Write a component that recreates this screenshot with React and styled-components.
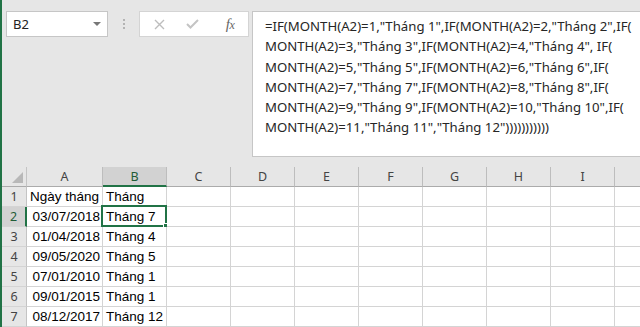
import React from "react";
import styled, { createGlobalStyle } from "styled-components";

const GlobalStyle = createGlobalStyle`
  html, body {
    margin: 0;
    padding: 0;
    background: #e6e6e6;
    overflow: hidden;
  }
`;

const Window = styled.div`
  width: 640px;
  height: 327px;
  box-sizing: border-box;
  border-left: 2px solid #217346;
  background: #e6e6e6;
  display: flex;
  flex-direction: column;
  overflow: hidden;
`;

const TopBar = styled.div`
  display: flex;
  align-items: flex-start;
  padding: 11px 0 0 4px;
`;

const NameBox = styled.div`
  width: 102px;
  height: 26px;
  box-sizing: border-box;
  border: 1px solid #c6c6c6;
  background: #fff;
  display: flex;
  align-items: center;
  justify-content: space-between;
  padding: 0 6px;
  font-family: "Noto Sans", sans-serif;
  font-size: 13px;
  color: #222;
`;

const Arrow = styled.span`
  width: 0;
  height: 0;
  border-left: 4px solid transparent;
  border-right: 4px solid transparent;
  border-top: 4px solid #777;
`;

const Grip = styled.div`
  display: flex;
  flex-direction: column;
  gap: 2px;
  margin: 8px 14px 0 15px;
`;

const Dot = styled.span`
  width: 2px;
  height: 2px;
  background: #b3b3b3;
`;

const FxBox = styled.div`
  width: 110px;
  height: 26px;
  box-sizing: border-box;
  border: 1px solid #d4d4d4;
  background: #fff;
  display: grid;
  grid-template-columns: 38px 28px 42px;
  align-items: center;
`;

const IconSlot = styled.div`
  display: flex;
  justify-content: center;
  align-items: center;
  padding-left: ${(p) => p.$shift || 0}px;
`;

const FxText = styled.span`
  font-family: "Liberation Serif", serif;
  font-style: italic;
  font-size: 15px;
  color: #666;
  letter-spacing: -0.5px;
  small {
    font-size: 12px;
  }
`;

const FormulaBar = styled.div`
  flex: 1;
  height: 146px;
  box-sizing: border-box;
  margin-left: 3px;
  border: 1px solid #c6c6c6;
  border-right: none;
  background: #fff;
  padding: 4px 0 0 12px;
  font-family: "Noto Sans", sans-serif;
  font-size: 13.2px;
  line-height: 20.3px;
  color: #262626;
`;

const FormulaLine = styled.div`
  white-space: pre;
`;

const Sheet = styled.div`
  margin-top: 10px;
  display: grid;
  grid-template-columns: 25px 76px repeat(9, 64px);
  grid-auto-rows: 20px;
`;

const Corner = styled.div`
  box-sizing: border-box;
  border-right: 1px solid #c4c4c4;
  border-bottom: 1px solid #ababab;
  display: flex;
  align-items: flex-end;
  justify-content: flex-end;
  padding: 0 3px 3px 0;
`;

const ColHead = styled.div`
  box-sizing: border-box;
  background: ${(p) => (p.$selected ? "#d2d2d2" : "#e6e6e6")};
  border-right: 1px solid #bdbdbd;
  border-bottom: ${(p) => (p.$selected ? "2px solid #217346" : "1px solid #ababab")};
  display: flex;
  align-items: center;
  justify-content: center;
  font-family: "Noto Sans", sans-serif;
  font-size: 12.5px;
  color: ${(p) => (p.$selected ? "#1f5c37" : "#444")};
  padding-top: ${(p) => (p.$selected ? 1 : 0)}px;
`;

const RowHead = styled.div`
  box-sizing: border-box;
  background: ${(p) => (p.$selected ? "#d2d2d2" : "#e6e6e6")};
  border-right: ${(p) => (p.$selected ? "2px solid #217346" : "1px solid #c4c4c4")};
  border-bottom: 1px solid #d4d4d4;
  display: flex;
  align-items: center;
  justify-content: center;
  font-family: "Noto Sans", sans-serif;
  font-size: 12.5px;
  color: ${(p) => (p.$selected ? "#1f5c37" : "#444")};
`;

const Cell = styled.div`
  position: relative;
  box-sizing: border-box;
  background: #fff;
  border-right: 1px solid #d4d4d4;
  border-bottom: 1px solid #d4d4d4;
  padding: 0 2px 0 3px;
  font-family: "Liberation Sans", Arial, sans-serif;
  font-size: 13.5px;
  line-height: 20px;
  color: #000;
  white-space: nowrap;
  text-align: ${(p) => p.$align || "left"};
`;

const Selection = styled.div`
  position: absolute;
  top: -2px;
  left: -2px;
  right: -1px;
  bottom: -1px;
  border: 2px solid #217346;
  pointer-events: none;
`;

const FillHandle = styled.div`
  position: absolute;
  right: -5px;
  bottom: -5px;
  width: 5px;
  height: 5px;
  background: #217346;
  border: 1px solid #fff;
`;

const formula = [
  '=IF(MONTH(A2)=1,"Tháng 1",IF(MONTH(A2)=2,"Tháng 2",IF(',
  'MONTH(A2)=3,"Tháng 3",IF(MONTH(A2)=4,"Tháng 4", IF(',
  'MONTH(A2)=5,"Tháng 5",IF(MONTH(A2)=6,"Tháng 6",IF(',
  'MONTH(A2)=7,"Tháng 7",IF(MONTH(A2)=8,"Tháng 8",IF(',
  'MONTH(A2)=9,"Tháng 9",IF(MONTH(A2)=10,"Tháng 10",IF(',
  'MONTH(A2)=11,"Tháng 11","Tháng 12")))))))))))',
];

// the last column is only partly in view, its letter falls off the edge
const columns = ["A", "B", "C", "D", "E", "F", "G", "H", "I", ""];

const rows = [
  ["Ngày tháng", "Tháng"],
  ["03/07/2018", "Tháng 7"],
  ["01/04/2018", "Tháng 4"],
  ["09/05/2020", "Tháng 5"],
  ["07/01/2010", "Tháng 1"],
  ["09/01/2015", "Tháng 1"],
  ["08/12/2017", "Tháng 12"],
];

export default function App() {
  return (
    <>
      <GlobalStyle />
      <Window>
        <TopBar>
          <NameBox>
            <span>B2</span>
            <Arrow />
          </NameBox>
          <Grip>
            <Dot />
            <Dot />
            <Dot />
          </Grip>
          <FxBox>
            <IconSlot>
              <svg width="11" height="11" viewBox="0 0 11 11">
                <path d="M1 1L10 10M10 1L1 10" stroke="#bdbdbd" strokeWidth="1.4" />
              </svg>
            </IconSlot>
            <IconSlot>
              <svg width="13" height="10" viewBox="0 0 13 10">
                <path d="M1 5L4.5 8.5L12 1" stroke="#c4c4c4" strokeWidth="2" fill="none" />
              </svg>
            </IconSlot>
            <IconSlot $shift={6}>
              <FxText>
                f<small>x</small>
              </FxText>
            </IconSlot>
          </FxBox>
          <FormulaBar>
            {formula.map((line, i) => (
              <FormulaLine key={i}>{line}</FormulaLine>
            ))}
          </FormulaBar>
        </TopBar>

        <Sheet>
          <Corner>
            <svg width="11" height="11" viewBox="0 0 11 11">
              <polygon points="11,0 11,11 0,11" fill="#b8b8b8" />
            </svg>
          </Corner>
          {columns.map((c, i) => (
            <ColHead key={i} $selected={c === "B"}>
              {c}
            </ColHead>
          ))}
          {rows.map((r, i) => (
            <React.Fragment key={i}>
              <RowHead $selected={i === 1}>{i + 1}</RowHead>
              <Cell $align={i === 0 ? "left" : "right"}>{r[0]}</Cell>
              <Cell>
                {r[1]}
                {i === 1 && (
                  <Selection>
                    <FillHandle />
                  </Selection>
                )}
              </Cell>
              {columns.slice(2).map((c, j) => (
                <Cell key={j} />
              ))}
            </React.Fragment>
          ))}
        </Sheet>
      </Window>
    </>
  );
}
